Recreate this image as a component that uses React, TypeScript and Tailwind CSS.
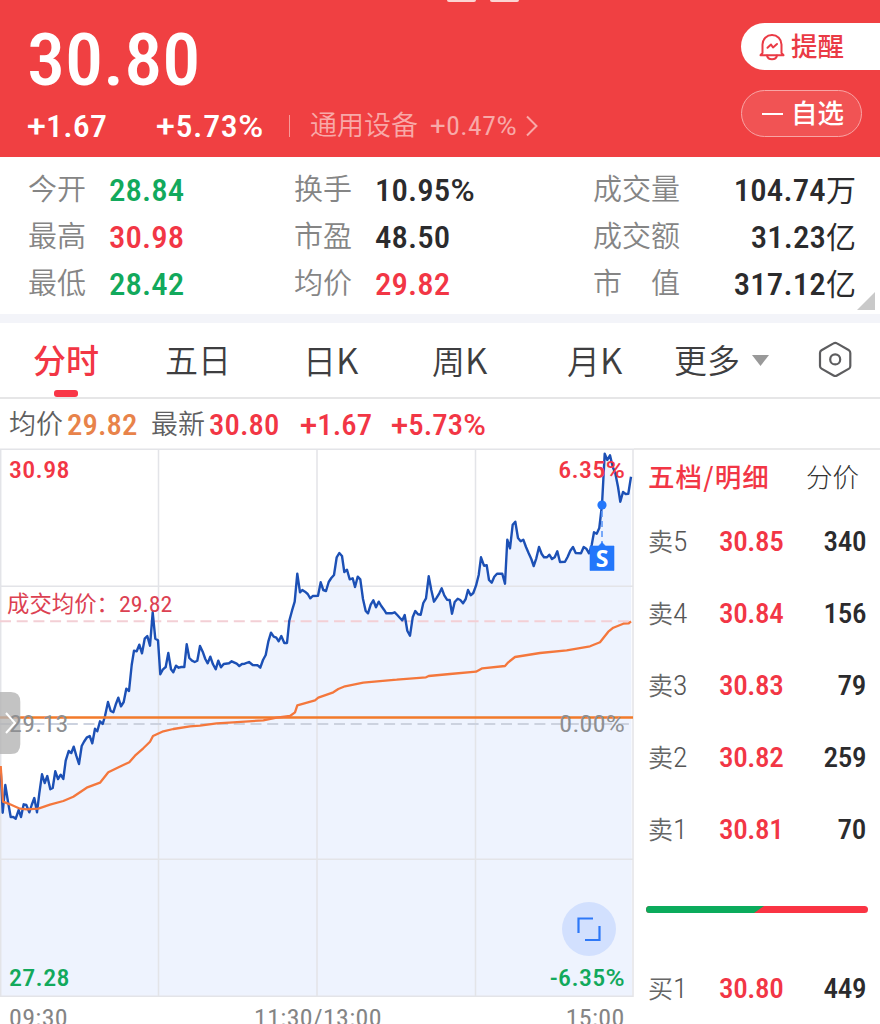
import React from "react";

const NUM = "font-['Roboto','Noto_Sans_CJK_SC',sans-serif] [font-stretch:87.5%] scale-x-[1.06] leading-none whitespace-nowrap";

/** Figures are set in the narrow cut; plus and percent signs keep the full width. */
function Fig({ children, className, end }: { children: string; className: string; end?: boolean }) {
  return (
    <span className={`${NUM} ${end ? "origin-right" : "origin-left"} ${className}`}>
      {children.split(/([+%])/).map((part, i) =>
        part === "+" || part === "%" ? (
          <span key={i} className="[font-stretch:100%]">{part}</span>
        ) : (
          part
        ),
      )}
    </span>
  );
}

const scale = (ox: number, oy: number, pts: number[][]) =>
  pts.map(([x, y]) => `${(ox + x / 3).toFixed(1)},${(oy + y / 3).toFixed(1)}`);

const price = [
  ...scale(0, 580, [
    [2, 570], [8, 698], [16, 615], [24, 665], [32, 711], [40, 711], [47, 716], [56, 690], [63, 711], [71, 673], [79, 675], [88, 697],
    [95, 675], [103, 654], [111, 697], [118, 640], [126, 583], [134, 609], [142, 588], [151, 628], [158, 624], [166, 574], [174, 597],
    [182, 584], [190, 597], [197, 542], [206, 513], [214, 519], [221, 500], [229, 527], [237, 552], [245, 498], [252, 485], [261, 472],
    [269, 468], [277, 490], [285, 446], [292, 454], [300, 424], [308, 432], [315, 408], [324, 366], [332, 393], [340, 397], [348, 371],
    [355, 353], [363, 379], [371, 366], [379, 326], [387, 333], [395, 255], [402, 212], [410, 214], [418, 194], [426, 220], [434, 176],
    [442, 168], [450, 197], [458, 97], [466, 176], [474, 181], [481, 283], [489, 268], [497, 261], [505, 219], [513, 268], [520, 277],
    [528, 257], [536, 263], [544, 261], [553, 261], [560, 193], [568, 234], [576, 242], [584, 246], [592, 242], [600, 198], [608, 215],
    [616, 237], [623, 250], [631, 230], [639, 253], [647, 268], [655, 242],
  ]),
  ...scale(200, 500, [
    [63, 502], [71, 492], [87, 490], [95, 484], [110, 491], [118, 498], [126, 492], [134, 491], [147, 486], [158, 495], [173, 496],
    [181, 503], [189, 480], [197, 465], [205, 425], [213, 398], [221, 410], [229, 413], [236, 424], [244, 408], [253, 429], [261, 429],
    [268, 362], [276, 332], [284, 305], [292, 221], [300, 277], [307, 270], [315, 275], [323, 282], [331, 295], [338, 288], [354, 287],
    [362, 247], [370, 270], [378, 273], [386, 246], [394, 234], [402, 225], [410, 172], [418, 159], [426, 168], [433, 216], [441, 209],
    [449, 238], [458, 235], [465, 261], [473, 230], [481, 238], [489, 297], [497, 333], [504, 340], [512, 314], [520, 301], [528, 322],
    [536, 305], [544, 318], [552, 329], [559, 340], [575, 340], [584, 337], [592, 345], [600, 354],
  ]),
  ...scale(400, 440, [
    [7, 541], [14, 525], [22, 572], [30, 587], [38, 532], [46, 513], [54, 523], [62, 524], [70, 489], [78, 475], [86, 409], [94, 450],
    [102, 485], [110, 473], [118, 460], [125, 445], [133, 466], [141, 479], [149, 480], [156, 521], [164, 486], [173, 476], [181, 480],
    [189, 490], [197, 477], [204, 450], [212, 466], [220, 459], [228, 437], [236, 405], [243, 352], [252, 377], [260, 376], [267, 420],
    [275, 428], [283, 410], [291, 401], [307, 401], [315, 431], [322, 299], [330, 325], [338, 254], [346, 245], [354, 294], [362, 304],
    [370, 299], [378, 321], [386, 340], [394, 357], [401, 378], [409, 355], [417, 321], [425, 342], [432, 352], [441, 352], [448, 344],
    [456, 357], [464, 352], [472, 334], [480, 366], [495, 365], [503, 350], [511, 332], [519, 321], [527, 339], [543, 340], [551, 321],
    [559, 326], [567, 340], [575, 315], [582, 277], [590, 281], [598, 264], [606, 194], [614, 41], [622, 60], [630, 46], [638, 80],
    [646, 100], [654, 140], [661, 185], [669, 156], [677, 162], [685, 161], [693, 110],
  ]),
];

const average = [
  ...scale(0, 580, [
    [2, 558], [9, 665], [30, 673], [60, 686], [80, 688], [115, 686], [150, 674], [190, 663], [220, 650], [260, 623], [300, 608],
    [325, 577], [345, 567], [365, 557], [388, 547], [405, 527], [430, 505], [450, 485], [459, 468], [490, 454], [520, 447], [570, 439],
  ]),
  ...scale(200, 500, [
    [0, 677], [50, 670], [100, 667], [190, 661], [230, 653], [270, 648], [285, 637], [292, 616], [345, 601], [355, 593], [400, 577],
    [415, 567], [435, 559], [490, 548], [590, 539],
  ]),
  ...scale(400, 440, [
    [0, 718], [78, 712], [86, 708], [150, 702], [228, 695], [247, 685], [315, 678], [325, 667], [345, 651], [420, 639], [500, 631],
    [570, 619], [600, 607], [625, 575], [640, 563], [670, 551], [686, 550], [693, 544],
  ]),
];

function Header() {
  return (
    <header className="relative flex h-[157px] justify-between bg-[#f04042] text-white">
      <div className="absolute left-[447px] top-0 flex gap-3.5">
        <i className="h-[2px] w-[29px] rounded-b bg-[#fbd5d3]" />
        <i className="h-[2px] w-[29px] rounded-b bg-[#fbd5d3]" />
      </div>
      <div className="flex flex-col pl-[27px] pt-[25px]">
        <div className={`${NUM} h-[74px] origin-left text-[72px] font-medium leading-[74px] tracking-[-0.1px]`}>30.80</div>
        <div className="mt-[7px] flex h-[40px] items-center">
          <Fig className="w-[129px] text-[32px] font-medium tracking-[0.2px]">+1.67</Fig>
          <Fig className="w-[133px] text-[32px] font-medium tracking-[0.6px]">+5.73%</Fig>
          <i className="h-[22px] w-px bg-[#f79a98]" />
          <span className="ml-[20px] w-[120px] pb-[5px] text-[27px] font-[350] leading-none text-[#f8a9a8]">通用设备</span>
          <Fig className="w-[88px] text-[26px] tracking-[0.5px] text-[#f8a9a8]">+0.47%</Fig>
          <svg className="ml-[8px]" width="12" height="22" viewBox="0 0 12 22" fill="none" stroke="#f8a9a8" strokeWidth="2">
            <path d="M1 1.5 10.5 11 1 20.5" />
          </svg>
        </div>
      </div>
      <div className="flex w-[139px] flex-col gap-[20px] pt-[23px]">
        <div className="flex h-[47px] items-center rounded-l-full bg-white pl-[18px] text-[#ea3a45]">
          <svg width="26" height="28" viewBox="0 0 26 28" fill="none" stroke="currentColor" strokeWidth="2" strokeLinejoin="round" strokeLinecap="round">
            <path d="M3.5 20V11.5a9.5 9.5 0 0 1 19 0V20l2 2.2h-23z" />
            <path d="M8 22.5c1 5 9 5 10 0" />
            <path d="M8.5 14.8 12 11.5l2 3 4-3.5" />
          </svg>
          <span className="ml-[6px] pb-[2px] text-[26.5px] font-medium leading-none">提醒</span>
        </div>
        <div className="flex h-[47px] w-[121px] items-center rounded-full border border-[#f8a5a5] bg-[#f15354] pl-[20px]">
          <i className="h-[2px] w-[21px] bg-white" />
          <span className="ml-[8px] pb-[3px] text-[26.5px] font-medium leading-none">自选</span>
        </div>
      </div>
    </header>
  );
}

const G = "text-[#12a95c]";
const R = "text-[#f23645]";
const K = "text-[#2b2b2d]";
const stats = [
  ["今开", "28.84", G, "换手", "10.95%", K, "成交量", "104.74", "万"],
  ["最高", "30.98", R, "市盈", "48.50", K, "成交额", "31.23", "亿"],
  ["最低", "28.42", G, "均价", "29.82", R, "市　值", "317.12", "亿"],
];

function Stats() {
  const label = "pb-[4px] text-[29px] font-[350] leading-none text-[#858585]";
  const value = "pt-px text-[31px] font-medium tracking-[0.1px]";
  return (
    <section className="relative h-[157px] pl-[28px] pr-[24px] pt-[9px]">
      {stats.map((s) => (
        <div key={s[0]} className="flex h-[47px] items-center">
          <span className={`${label} w-[81px]`}>{s[0]}</span>
          <Fig className={`${value} w-[185px] ${s[2]}`}>{s[1]}</Fig>
          <span className={`${label} w-[81px]`}>{s[3]}</span>
          <Fig className={`${value} w-[218px] ${s[5]}`}>{s[4]}</Fig>
          <span className={label}>{s[6]}</span>
          <Fig end className={`${value} ml-auto ${K}`}>{s[7]}</Fig>
          <span className={`pb-[3px] text-[30px] leading-none ${K}`}>{s[8]}</span>
        </div>
      ))}
      <svg className="absolute bottom-[4px] right-[5px]" width="18" height="18">
        <path d="M18 0V18H0z" fill="#c9c9c9" />
      </svg>
    </section>
  );
}

function Tabs() {
  const tab = "text-[33px] leading-none whitespace-nowrap";
  const k = <span className="text-[35px] leading-none">K</span>;
  return (
    <nav className="relative flex h-[76px] items-center border-b-2 border-[#e6e6e7] pl-[33px] text-[#3e3e40]">
      <span className={`${tab} w-[132px] pb-px font-medium text-[#f23645]`}>分时</span>
      <span className={`${tab} w-[138px] pb-px font-[350]`}>五日</span>
      <span className={`${tab} w-[129px] pb-[3px] font-[350]`}>日{k}</span>
      <span className={`${tab} w-[135px] pb-[3px] font-[350]`}>周{k}</span>
      <span className={`${tab} w-[107px] pb-[3px] font-[350]`}>月{k}</span>
      <span className={`${tab} pb-px font-[350]`}>更多</span>
      <svg className="ml-[12px]" width="17" height="11">
        <path d="M0 0H17L8.5 11z" fill="#999" />
      </svg>
      <svg className="absolute left-[818px] top-[18px]" width="34" height="37" viewBox="0 0 34 37" fill="none" stroke="#5d5d5f" strokeWidth="2.2" strokeLinejoin="round">
        <path d="M15.5 2.4Q17.3 1.3 19 2.4L31 9.3Q32.3 10.2 32.3 12V25Q32.3 26.8 31 27.6L19 34.5Q17.3 35.5 15.5 34.5L3.5 27.6Q2 26.8 2 25V12Q2 10.2 3.5 9.3z" />
        <circle cx="17.2" cy="18.4" r="5" />
      </svg>
      <i className="absolute left-[54px] top-[67px] h-[7px] w-[24px] rounded-[3px] bg-[#f93647]" />
    </nav>
  );
}

function Legend() {
  const v = "pt-[2px] text-[29px] font-medium tracking-[0.1px]";
  const l = "w-[58px] pb-[4px]";
  return (
    <div className="flex h-[49px] items-center pl-[9px] pt-px text-[27px] font-[350] leading-none text-[#5f5f61]">
      <span className={l}>均价</span>
      <Fig className={`${v} w-[84px] text-[#e8834a]`}>29.82</Fig>
      <span className={l}>最新</span>
      <Fig className={`${v} w-[91px] ${R}`}>30.80</Fig>
      <Fig className={`${v} w-[91px] ${R}`}>+1.67</Fig>
      <Fig className={`${v} ${R}`}>+5.73%</Fig>
    </div>
  );
}

function Chart() {
  const t = "absolute text-[24.5px] tracking-[0.3px]";
  return (
    <div className="relative h-[576px] w-[634px] shrink-0">
      <svg className="block" width="634" height="549" viewBox="0 448 634 549" fill="none">
        <polygon points={`1,996 1,770 ${price.join(" ")} 632,996`} fill="#eef3fe" />
        <g stroke="#e3e4e8" strokeWidth="1.5">
          <path d="M0 449.2H634M0 586.2H633M0 859.2H633M0 996.2H633M.7 449V997M158.5 449V996M317 449V996M475.5 449V996M633 449V997" />
        </g>
        <path d="M0 621.2H632" stroke="#f3cfd5" strokeWidth="2" strokeDasharray="11 5.7" />
        <path d="M0 724H632" stroke="#ccd2df" strokeWidth="2" strokeDasharray="11 5.7" />
        <polyline points={price.join(" ")} stroke="#1c50b5" strokeWidth="2.4" strokeLinejoin="round" />
        <path d="M0 717.5H633" stroke="#f27a2a" strokeWidth="2.6" />
        <polyline points={average.join(" ")} stroke="#f4773c" strokeWidth="2.3" strokeLinejoin="round" />
        <path d="M602 511V544" stroke="#5b97f8" strokeWidth="1.6" strokeDasharray="6 4" />
        <circle cx="602" cy="505" r="4.6" fill="#2377fb" />
        <path d="M590 546H598.5L602 542.5 605.5 546H614V570.5H590z" fill="#2377fb" stroke="#2377fb" strokeWidth="0.6" />
        <path d="M0 692H11Q20.3 692 20.3 702V744Q20.3 754 11 754H0z" fill="#b4b4b4" fillOpacity=".8" />
      </svg>
      <Fig className={`${t} left-[9px] top-[10px] font-medium ${R}`}>30.98</Fig>
      <Fig end className={`${t} right-[9px] top-[10px] font-medium ${R}`}>6.35%</Fig>
      <span className="absolute left-[7px] top-[143px] whitespace-nowrap text-[22.4px] leading-none text-[#dc4152]">成交均价：</span>
      <Fig className="absolute left-[119px] top-[145px] text-[22.5px] text-[#dc4152]">29.82</Fig>
      <Fig className={`${t} left-[9px] top-[264px] text-[#8e8f92]`}>29.13</Fig>
      <Fig end className={`${t} right-[9px] top-[264px] text-[#8e8f92]`}>0.00%</Fig>
      <svg className="absolute left-[5px] top-[263px]" width="12" height="24" fill="none" stroke="#fff" strokeWidth="2">
        <path d="M1 2 10 12 1 22" />
      </svg>
      <Fig className={`${t} left-[9px] top-[518px] font-medium ${G}`}>27.28</Fig>
      <Fig end className={`${t} right-[9px] top-[518px] font-medium ${G}`}>-6.35%</Fig>
      <span className="absolute left-[590px] top-[98px] w-[24px] text-center font-['Noto_Sans',sans-serif] text-[23px] font-bold leading-[24px] text-white">S</span>
      <svg className="absolute left-[562px] top-[454px]" width="54" height="54" fill="none">
        <circle cx="27" cy="27" r="27" fill="#d2e0fe" />
        <path d="M31 16.5H16.5V31M23 38H37.5V24" stroke="#2e78f7" strokeWidth="2.2" />
      </svg>
      <div className="absolute inset-x-0 bottom-0 h-[26px] overflow-hidden text-[#858585]">
        <Fig className={`${t} left-[9px] top-[8px]`}>09:30</Fig>
        <Fig className={`${t} left-[254px] top-[8px]`}>11:30/13:00</Fig>
        <Fig end className={`${t} right-[9px] top-[8px]`}>15:00</Fig>
      </div>
    </div>
  );
}

function Order({ side, level, p, n }: { side: string; level: string; p: string; n: string }) {
  return (
    <div className="flex h-[72px] items-center">
      <span className="w-[25px] pb-[4px] text-[25px] font-[350] leading-none text-[#666]">{side}</span>
      <Fig className="w-[46px] text-[28px] font-light text-[#555]">{level}</Fig>
      <Fig className={`text-[27.5px] font-medium tracking-[-0.4px] ${R}`}>{p}</Fig>
      <Fig end className={`ml-auto text-[27.5px] font-medium tracking-[-0.3px] ${K}`}>{n}</Fig>
    </div>
  );
}

function Book() {
  return (
    <aside className="flex-1 border-t-2 border-[#e9e9ea] pl-[14px] pr-[14px]">
      <div className="flex h-[56px] items-center pb-[4px] text-[26.5px] leading-none">
        <span className={`font-medium tracking-[1.1px] ${R}`}>五档/明细</span>
        <span className="ml-auto mr-[7px] font-light text-[#333]">分价</span>
      </div>
      <Order side="卖" level="5" p="30.85" n="340" />
      <Order side="卖" level="4" p="30.84" n="156" />
      <Order side="卖" level="3" p="30.83" n="79" />
      <Order side="卖" level="2" p="30.82" n="259" />
      <Order side="卖" level="1" p="30.81" n="70" />
      <div className="-ml-[2px] -mr-[2px] flex h-[87px] items-center">
        <svg className="w-full" height="7" viewBox="0 0 222 7" preserveAspectRatio="none">
          <rect width="222" height="7" rx="3.5" fill="#fa3444" />
          <path d="M3.5 0H118L108 7H3.5A3.5 3.5 0 0 1 3.5 0z" fill="#0bab5c" />
        </svg>
      </div>
      <Order side="买" level="1" p="30.80" n="449" />
    </aside>
  );
}

export default function App() {
  return (
    <div className="h-[1024px] w-[880px] overflow-hidden bg-white font-['Noto_Sans_CJK_SC',sans-serif]">
      <Header />
      <Stats />
      <div className="h-[9px] bg-[#f3f4f9]" />
      <Tabs />
      <Legend />
      <main className="flex">
        <Chart />
        <Book />
      </main>
    </div>
  );
}
